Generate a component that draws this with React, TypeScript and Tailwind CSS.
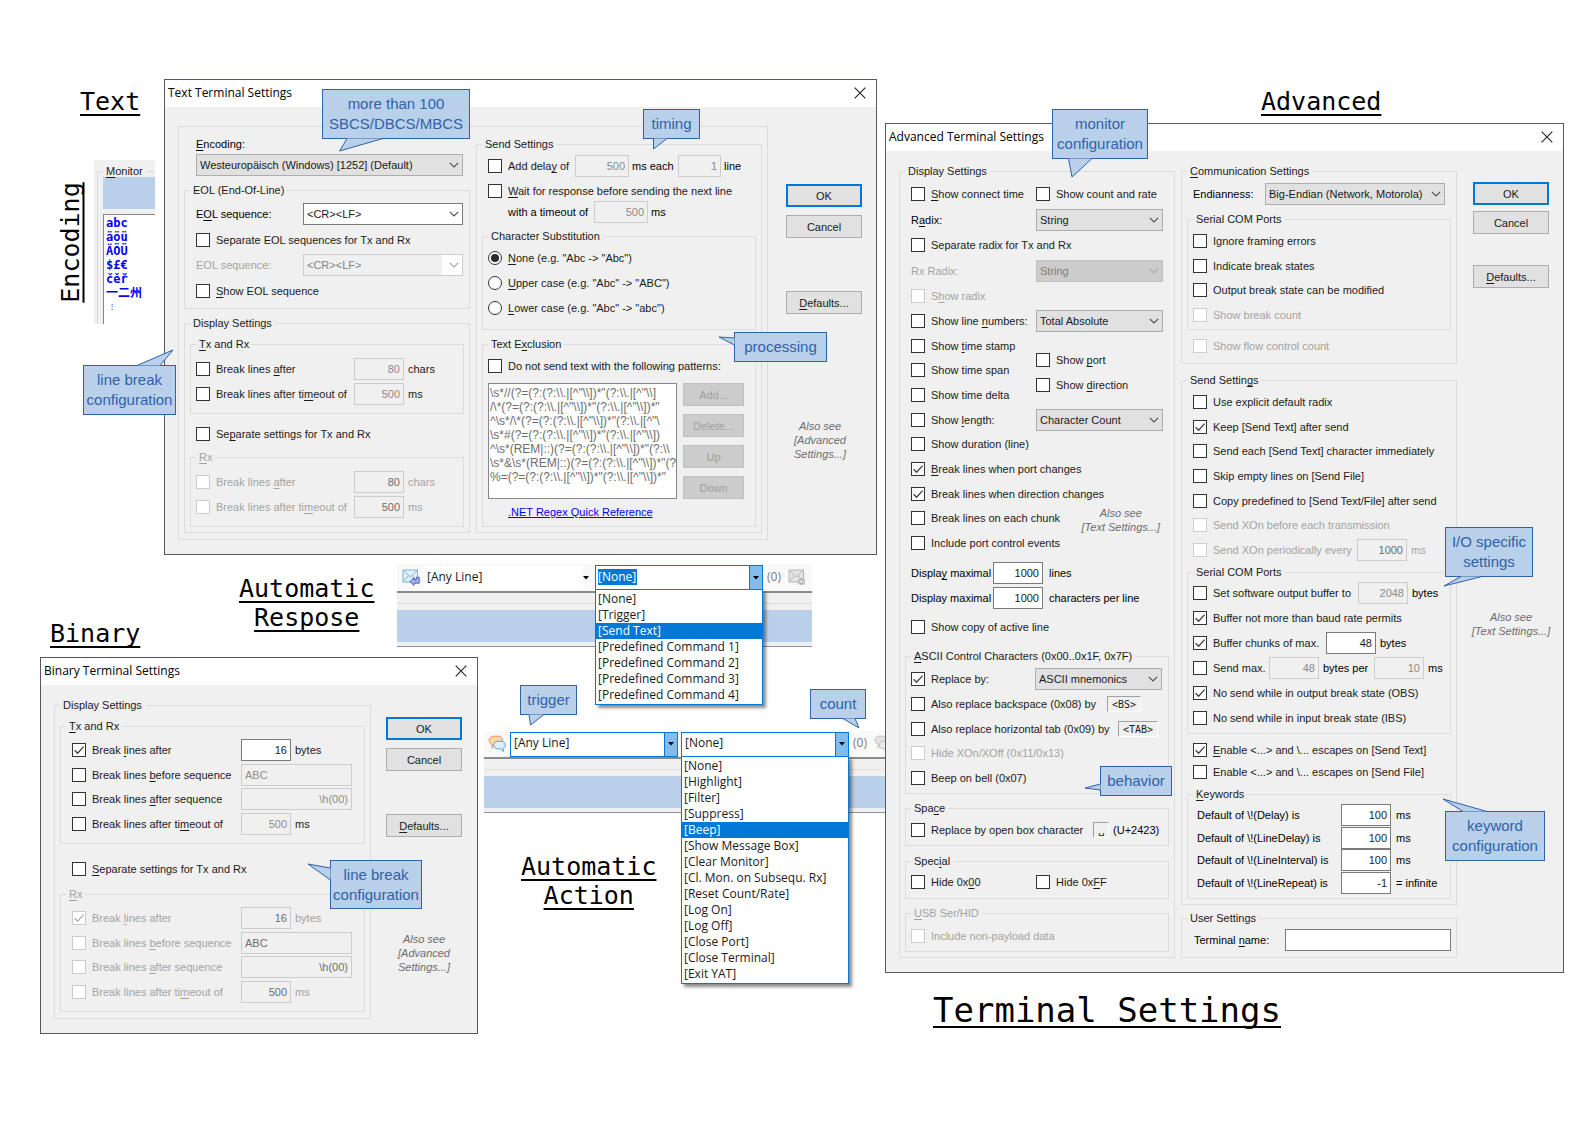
import React from "react";

const UI = "font-['Liberation_Sans',Arial,sans-serif] text-[11px] leading-[14px]";
const SEGOE = "font-['Open_Sans','Noto_Sans',sans-serif] text-[12px]";

/** Renders a caption whose access key is marked with "&". */
function Mn({ t }: { t: string }) {
  const i = t.indexOf("&");
  if (i < 0) return <span>{t}</span>;
  return (
    <span>
      {t.slice(0, i)}
      <span className="underline decoration-1 underline-offset-2 [text-decoration-skip-ink:none]">{t[i + 1]}</span>
      {t.slice(i + 2)}
    </span>
  );
}

/** Titled frame; inner carries the padding so that the title keeps its place. */
function Group({ title, off, className = "", inner = "", children }: { title: string; off?: boolean; className?: string; inner?: string; children: React.ReactNode }) {
  return (
    <fieldset className={"min-w-0 border border-[#dcdcdc] " + className}>
      <legend className={"ml-[5px] px-[3px] " + (off ? "text-[#a3a3a3]" : "text-[#1a1a1a]")}>
        <Mn t={title} />
      </legend>
      <div className={inner}>{children}</div>
    </fieldset>
  );
}

function Check({ t, on, off, className = "" }: { t: string; on?: boolean; off?: boolean; className?: string }) {
  return (
    <label className={"flex h-[22px] shrink-0 items-center gap-[6px] whitespace-nowrap " + (off ? "text-[#a3a3a3] " : "text-[#1a1a1a] ") + className}>
      <span className="relative block h-[14px] w-[14px] shrink-0">
        <input
          type="checkbox"
          defaultChecked={on}
          disabled={off}
          className="peer block h-[14px] w-[14px] appearance-none border border-[#333333] bg-white disabled:border-[#cccccc]"
        />
        <svg viewBox="0 0 14 14" className={"pointer-events-none absolute inset-0 hidden peer-checked:block " + (off ? "stroke-[#b0b0b0]" : "stroke-[#404040]")} fill="none" strokeWidth="1.3">
          <path d="M2.6 7.2 5.6 10.2 11.6 3.6" />
        </svg>
      </span>
      <Mn t={t} />
    </label>
  );
}

function Radio({ t, on }: { t: string; on?: boolean }) {
  return (
    <label className="flex h-[22px] items-center gap-[6px] whitespace-nowrap text-[#1a1a1a]">
      <span className="relative block h-[14px] w-[14px]">
        <input type="radio" name="substitution" defaultChecked={on} className="peer block h-[14px] w-[14px] appearance-none rounded-full border border-[#333333] bg-white" />
        <span className="pointer-events-none absolute inset-[3px] hidden rounded-full bg-[#2b2b2b] peer-checked:block" />
      </span>
      <Mn t={t} />
    </label>
  );
}

function Field({ v, label, off, dark, left, className = "w-[50px]" }: { v: string; label: string; off?: boolean; dark?: boolean; left?: boolean; className?: string }) {
  return (
    <input
      type="text"
      aria-label={label}
      defaultValue={v}
      disabled={off}
      className={
        "h-[22px] shrink-0 border px-[3px] " +
        (left ? "text-left " : "text-right ") +
        (off ? "border-[#cccccc] bg-[#f0f0f0] " + (dark ? "text-[#6d6d6d] " : "text-[#8c8c8c] ") : "border-[#7a7a7a] bg-white text-[#1a1a1a] ") +
        className
      }
    />
  );
}

function Select({ v, label, kind = "list", className = "" }: { v: string; label: string; kind?: "list" | "edit" | "listOff" | "editOff"; className?: string }) {
  const look = {
    list: "border-[#adadad] bg-[#e1e1e1] text-[#1a1a1a]",
    edit: "border-[#7a7a7a] bg-white text-[#1a1a1a]",
    listOff: "border-[#bfbfbf] bg-[#cccccc] text-[#7d7d7d]",
    editOff: "border-[#cccccc] bg-[#f0f0f0] text-[#838383]",
  }[kind];
  const off = kind === "listOff" || kind === "editOff";
  return (
    <span className={"relative block h-[22px] shrink-0 " + className}>
      <select aria-label={label} disabled={off} className={"block h-full w-full appearance-none border pr-5 pl-[3px] opacity-100 " + look}>
        <option>{v}</option>
      </select>
      {kind === "editOff" && <span className="pointer-events-none absolute inset-y-px right-px w-5 bg-white" />}
      <svg viewBox="0 0 10 6" className={"pointer-events-none absolute top-[8px] right-[4px] h-[6px] w-[10px] " + (off ? "stroke-[#a8a8a8]" : "stroke-[#505050]")} fill="none" strokeWidth="1.2">
        <path d="M0.8 0.8 5 5 9.2 0.8" />
      </svg>
    </span>
  );
}

function Btn({ t, kind = "normal", className = "" }: { t: string; kind?: "normal" | "primary" | "off"; className?: string }) {
  const look = {
    normal: "border border-[#adadad] bg-[#e1e1e1] text-[#1a1a1a]",
    primary: "border-2 border-[#0078d7] bg-[#e1e1e1] text-[#1a1a1a]",
    off: "border border-[#bfbfbf] bg-[#cccccc] text-[#a0a0a0]",
  }[kind];
  return (
    <button type="button" disabled={kind === "off"} className={"flex h-[23px] shrink-0 items-center justify-center " + look + " " + className}>
      <Mn t={t} />
    </button>
  );
}

function Also({ lines, className = "" }: { lines: string[]; className?: string }) {
  return (
    <p className={"flex flex-col items-center whitespace-nowrap text-[#6d6d6d] italic " + className}>
      {lines.map((l) => (
        <span key={l}>{l}</span>
      ))}
    </p>
  );
}

function Win({ title, className, children }: { title: string; className: string; children: React.ReactNode }) {
  return (
    <section aria-label={title} className={"absolute border border-[#55585e] bg-[#f0f0f0] " + className}>
      <header className="flex h-[27px] items-center justify-between bg-white pr-[10px] pb-[2px] pl-[3px]">
        <h2 className={SEGOE + " whitespace-nowrap text-black"}>{title}</h2>
        <button type="button" aria-label="Close">
          <svg viewBox="0 0 12 12" className="h-3 w-3 stroke-[#222222]" strokeWidth="1.1">
            <path d="M0.7 0.7 11.3 11.3M11.3 0.7 0.7 11.3" />
          </svg>
        </button>
      </header>
      <div className={"flex " + UI}>{children}</div>
    </section>
  );
}

/** Speech-bubble note; tail is [base, tip, base] in the bubble's own coordinates. */
function Callout({ lines, tail, className }: { lines: string[]; tail: string; className: string }) {
  return (
    <div className={"absolute z-20 flex flex-col items-center justify-center border border-[#2f62a8] bg-[#b9d0ea] font-['Liberation_Sans',Arial,sans-serif] text-[15px] leading-[20px] whitespace-nowrap text-[#2f62a8] " + className}>
      <svg className="absolute -top-px -left-px h-full w-full overflow-visible">
        <polyline points={tail} fill="#b9d0ea" stroke="#2f62a8" strokeWidth="1" />
      </svg>
      {lines.map((l) => (
        <span key={l} className="relative">{l}</span>
      ))}
    </div>
  );
}

function Heading({ lines, className }: { lines: string[]; className: string }) {
  return (
    <h1 className={"absolute flex flex-col items-center font-['DejaVu_Sans_Mono',monospace] whitespace-nowrap text-black underline decoration-2 underline-offset-4 [text-decoration-skip-ink:none] " + className}>
      {lines.map((l) => (
        <span key={l}>{l}</span>
      ))}
    </h1>
  );
}

const PATTERNS = [
  "\\s*//(?=(?:(?:\\\\.|[^\"\\\\])*\"(?:\\\\.|[^\"\\\\]",
  "/\\*(?=(?:(?:\\\\.|[^\"\\\\])*\"(?:\\\\.|[^\"\\\\])*\"",
  "^\\s*/\\*(?=(?:(?:\\\\.|[^\"\\\\])*\"(?:\\\\.|[^\"\\",
  "\\s*#(?=(?:(?:\\\\.|[^\"\\\\])*\"(?:\\\\.|[^\"\\\\])",
  "^\\s*(REM|::)(?=(?:(?:\\\\.|[^\"\\\\])*\"(?:\\\\",
  "\\s*&\\s*(REM|::)(?=(?:(?:\\\\.|[^\"\\\\])*\"(?",
  "%=(?=(?:(?:\\\\.|[^\"\\\\])*\"(?:\\\\.|[^\"\\\\])*\"",
];

function TextTxRx({ title, off, className = "" }: { title: string; off?: boolean; className?: string }) {
  const unit = off ? "text-[#a3a3a3]" : "text-[#1a1a1a]";
  return (
    <Group title={title} off={off} className={"mx-[5px] " + className} inner="flex flex-col gap-[3px] pt-[7px] pb-2 pl-[5px]">
      <div className="flex items-center gap-1">
        <Check t="Break lines &after" off={off} className="w-[154px]" />
        <Field v="80" label="Characters" off dark={off} />
        <span className={unit}>chars</span>
      </div>
      <div className="flex items-center gap-1">
        <Check t="Break lines after ti&meout of" off={off} className="w-[154px]" />
        <Field v="500" label="Timeout" off dark={off} />
        <span className={unit}>ms</span>
      </div>
    </Group>
  );
}

function TextWindow() {
  return (
    <Win title="Text Terminal Settings" className="top-[79px] left-[164px] w-[713px]">
      <div className="mt-[19px] mb-[14px] ml-[13px] flex flex-1 gap-[6px] border border-[#dcdcdc] px-[5px] pb-[6px]">
        <div className="flex w-[286px] flex-col pt-[10px]">
          <span className="ml-3"><Mn t="&Encoding:" /></span>
          <Select v="Westeuropäisch (Windows) [1252] (Default)" label="Encoding" className="mt-[3px] mr-[7px] ml-3" />
          <Group title="EOL (End-Of-Line)" className="mt-[7px]" inner="pt-[6px] pr-[6px] pb-[6px] pl-[11px]">
            <div className="flex h-[99px] flex-col justify-between">
              <div className="flex items-center">
                <span className="w-[107px]"><Mn t="E&OL sequence:" /></span>
                <Select v="<CR><LF>" label="EOL sequence" kind="edit" className="flex-1" />
              </div>
              <Check t="Separate EOL sequences for Tx and Rx" />
              <div className="flex items-center">
                <span className="w-[107px] text-[#a3a3a3]">EOL sequence:</span>
                <Select v="<CR><LF>" label="Rx EOL sequence" kind="editOff" className="flex-1" />
              </div>
              <Check t="&Show EOL sequence" />
            </div>
          </Group>
          <Group title="Display Settings" className="mt-[7px]" inner="pt-[7px] pb-[5px]">
            <TextTxRx title="&Tx and Rx" />
            <Check t="Se&parate settings for Tx and Rx" className="mt-[9px] ml-[11px]" />
            <TextTxRx title="&Rx" off className="mt-[5px]" />
          </Group>
        </div>
        <div className="flex-1 pt-[10px]">
          <Group title="Send Settings" inner="px-[5px] pt-1 pb-[5px]">
            <div className="flex items-center pl-[6px]">
              <Check t="Add dela&y of" className="w-[87px]" />
              <Field v="500" label="Delay" off className="w-[54px]" />
              <span className="w-[49px] pl-[3px]">ms each</span>
              <Field v="1" label="Lines per delay" off className="w-[43px]" />
              <span className="pl-[3px]">line</span>
            </div>
            <div className="mt-1 flex h-5 items-center pl-[6px]">
              <Check t="&Wait for response before sending the next line" />
            </div>
            <div className="flex items-center pl-[26px]">
              <span className="w-[86px]">with a timeout of</span>
              <Field v="500" label="Response timeout" off className="w-[54px]" />
              <span className="pl-[3px]">ms</span>
            </div>
            <Group title="Character Substitution" className="mt-[6px]" inner="flex flex-col gap-[3px] pt-1 pb-[10px] pl-[5px]">
              <Radio t={'&None (e.g. "Abc -> "Abc")'} on />
              <Radio t={'&Upper case (e.g. "Abc" -> "ABC")'} />
              <Radio t={'&Lower case (e.g. "Abc" -> "abc")'} />
            </Group>
            <Group title="Text E&xclusion" className="mt-[7px]" inner="pt-1 pb-[7px] pl-[5px]">
              <Check t="Do not send text with the following patterns:" />
              <div className="mt-[6px] flex gap-[6px]">
                <ul className="h-[116px] w-[189px] border border-[#828790] bg-white pt-[2px] pl-px text-[12px] leading-[14px] whitespace-nowrap text-[#6d6d6d]">
                  {PATTERNS.map((p) => (
                    <li key={p}>{p}</li>
                  ))}
                </ul>
                <div className="flex w-[61px] flex-col justify-between">
                  <Btn t="Add..." kind="off" />
                  <Btn t="Delete..." kind="off" />
                  <Btn t="Up" kind="off" />
                  <Btn t="Down" kind="off" />
                </div>
              </div>
              <a href="#regex" className="mt-[6px] ml-5 block text-[#0000ff] underline">.NET Regex Quick Reference</a>
            </Group>
          </Group>
        </div>
      </div>
      <div className="mr-[14px] ml-[18px] flex w-[76px] flex-col pt-[77px]">
        <Btn t="OK" kind="primary" />
        <Btn t="Cancel" className="mt-2" />
        <Btn t="&Defaults..." className="mt-[53px]" />
        <Also lines={["Also see", "[Advanced", "Settings...]"]} className="mt-[105px] -ml-2" />
      </div>
    </Win>
  );
}

function BinaryTxRx({ title, off, className = "" }: { title: string; off?: boolean; className?: string }) {
  const unit = off ? "text-[#a3a3a3]" : "text-[#1a1a1a]";
  return (
    <Group title={title} off={off} className={"mx-[5px] " + className} inner="pt-[6px] pb-2 pl-[11px]">
      <div className="flex h-[96px] flex-col justify-between">
        <div className="flex items-center gap-1">
          <Check t="Break &lines after" on off={off} className="w-[165px]" />
          <Field v="16" label="Bytes" off={off} dark />
          <span className={unit}>bytes</span>
        </div>
        <div className="flex items-center gap-1">
          <Check t="Break lines &before sequence" off={off} className="w-[165px]" />
          <Field v="ABC" label="Sequence before" off dark={off} left className="w-[111px]" />
        </div>
        <div className="flex items-center gap-1">
          <Check t="Break lines &after sequence" off={off} className="w-[165px]" />
          <Field v="\h(00)" label="Sequence after" off dark={off} className="w-[111px]" />
        </div>
        <div className="flex items-center gap-1">
          <Check t="Break lines after ti&meout of" off={off} className="w-[165px]" />
          <Field v="500" label="Timeout" off dark={off} />
          <span className={unit}>ms</span>
        </div>
      </div>
    </Group>
  );
}

function BinaryWindow() {
  return (
    <Win title="Binary Terminal Settings" className="top-[657px] left-[40px] w-[438px]">
      <div className="flex-1 pt-[13px] pb-[14px] pl-[13px]">
        <Group title="Display Settings" inner="pt-[7px] pb-[6px]">
          <BinaryTxRx title="&Tx and Rx" />
          <Check t="&Separate settings for Tx and Rx" className="mt-[14px] ml-[17px]" />
          <BinaryTxRx title="&Rx" off className="mt-[7px]" />
        </Group>
      </div>
      <div className="mx-[15px] flex w-[76px] flex-col pt-8">
        <Btn t="OK" kind="primary" />
        <Btn t="Cancel" className="mt-2" />
        <Btn t="&Defaults..." className="mt-[43px]" />
        <Also lines={["Also see", "[Advanced", "Settings...]"]} className="mt-[95px]" />
      </div>
    </Win>
  );
}

function Sunken({ children, className = "" }: { children: React.ReactNode; className?: string }) {
  return (
    <span className={"block h-4 border border-t-[#a0a0a0] border-r-white border-b-white border-l-[#a0a0a0] px-1 font-['DejaVu_Sans_Mono',monospace] text-[10px] leading-[15px] text-[#1a1a1a] " + className}>
      {children}
    </span>
  );
}

function DisplayColumn() {
  return (
    <Group title="Display Settings" className="w-[276px]" inner="px-[5px] pt-[5px] pb-[5px]">
      <div className="pl-[6px]">
        <div className="flex h-[124px] flex-col justify-between">
          <div className="flex">
            <Check t="&Show connect time" className="w-[125px]" />
            <Check t="Show count and rate" />
          </div>
          <div className="flex items-center">
            <span className="w-[125px]"><Mn t="R&adix:" /></span>
            <Select v="String" label="Radix" className="w-[127px]" />
          </div>
          <Check t="Separate radix for Tx and Rx" />
          <div className="flex items-center">
            <span className="w-[125px] text-[#a3a3a3]">Rx Radix:</span>
            <Select v="String" label="Rx Radix" kind="listOff" className="w-[127px]" />
          </div>
          <Check t="S&how radix" off />
        </div>
        <div className="mt-[3px] flex">
          <div className="flex h-[244px] w-[125px] flex-col justify-between">
            <Check t="Show line &numbers:" />
            <Check t="Show &time stamp" />
            <Check t="Show time span" />
            <Check t="Show time delta" />
            <Check t="Show &length:" />
            <Check t="Show duration (line)" />
            <Check t="&Break lines when port changes" on />
            <Check t="Break lines when direction changes" on />
            <Check t="Break lines on each chunk" />
            <Check t="Include port control events" />
          </div>
          <div className="flex w-[127px] flex-col">
            <Select v="Total Absolute" label="Line number mode" />
            <Check t="Show &port" className="mt-[17px]" />
            <Check t="Show &direction" className="mt-[3px]" />
            <Select v="Character Count" label="Length mode" className="mt-[13px]" />
            <Also lines={["Also see", "[Text Settings...]"]} className="mt-[75px] mr-[3px] self-end" />
          </div>
        </div>
        <div className="mt-2 flex items-center">
          <span className="w-[82px]"><Mn t="Displa&y maximal" /></span>
          <Field v="1000" label="Maximal lines" />
          <span className="pl-[6px]">lines</span>
        </div>
        <div className="mt-[3px] flex items-center">
          <span className="w-[82px]">Display maximal</span>
          <Field v="1000" label="Maximal characters per line" />
          <span className="pl-[6px]">characters per line</span>
        </div>
        <Check t="Show copy of active line" className="mt-[7px]" />
      </div>
      <Group title="&ASCII Control Characters (0x00..0x1F, 0x7F)" className="mt-[11px]" inner="pt-[5px] pb-1 pl-[5px]">
        <div className="flex h-[121px] flex-col justify-between">
          <div className="flex items-center">
            <Check t="Replace by:" on className="w-[124px]" />
            <Select v="ASCII mnemonics" label="Replacement" className="w-[127px]" />
          </div>
          <div className="flex items-center gap-2">
            <Check t="Also replace backspace (0x08) by" className="w-[188px]" />
            <Sunken>&lt;BS&gt;</Sunken>
          </div>
          <div className="flex items-center gap-2">
            <Check t="Also replace horizontal tab (0x09) by" className="w-[199px]" />
            <Sunken>&lt;TAB&gt;</Sunken>
          </div>
          <Check t="Hide XOn/XOff (0x11/0x13)" off />
          <Check t="Beep on bell (0x07)" />
        </div>
      </Group>
      <Group title="Spa&ce" className="mt-[7px]" inner="pt-1 pb-1 pl-[5px]">
        <div className="flex items-center gap-1">
          <Check t="Replace by open box character" className="w-[178px]" />
          <Sunken>␣</Sunken>
          <span>(U+2423)</span>
        </div>
      </Group>
      <Group title="Spec&ial" className="mt-2" inner="pt-[3px] pb-[5px] pl-[5px]">
        <div className="flex">
          <Check t="Hide 0x&00" className="w-[125px]" />
          <Check t="Hide 0x&FF" />
        </div>
      </Group>
      <Group title="&USB Ser/HID" off className="mt-[7px]" inner="pt-[5px] pb-1 pl-[5px]">
        <Check t="Include non-payload data" off />
      </Group>
    </Group>
  );
}

const KEYWORDS = [
  ["Default of \\!(Delay) is", "100", "ms"],
  ["Default of \\!(LineDelay) is", "100", "ms"],
  ["Default of \\!(LineInterval) is", "100", "ms"],
  ["Default of \\!(LineRepeat) is", "-1", "= infinite"],
];

function CommunicationColumn() {
  return (
    <div className="w-[276px]">
      <Group title="&Communication Settings" inner="px-[5px] pt-[5px] pb-[6px]">
        <div className="flex items-center pl-[6px]">
          <span className="w-[72px]">Endianness:</span>
          <Select v="Big-Endian (Network, Motorola)" label="Endianness" className="w-[180px]" />
        </div>
        <Group title="Serial COM Ports" className="mt-[7px]" inner="pt-1 pb-[3px] pl-[5px]">
          <div className="flex h-24 flex-col justify-between">
            <Check t="Ignore framing errors" />
            <Check t="Indicate break states" />
            <Check t="Output break state can be modified" />
            <Check t="Show break count" off />
          </div>
        </Group>
        <Check t="Show flow control count" off className="mt-[5px] ml-[6px]" />
      </Group>
      <Group title="Send Settin&gs" className="mt-[9px]" inner="px-[5px] pt-1 pb-[5px]">
        <div className="flex h-[170px] flex-col justify-between pl-[6px]">
          <Check t="Use explicit default radix" />
          <Check t="Keep [Send Text] after send" on />
          <Check t="Send each [Send Text] character immediately" />
          <Check t="Skip empty lines on [Send File]" />
          <Check t="Copy predefined to [Send Text/File] after send" />
          <Check t="Send XOn before each transmission" off />
          <div className="flex items-center gap-1">
            <Check t="Send XOn periodically every" off className="w-[160px]" />
            <Field v="1000" label="XOn interval" off dark />
            <span className="text-[#a3a3a3]">ms</span>
          </div>
        </div>
        <Group title="Serial COM Ports" className="mt-1" inner="pt-[3px] pb-1 pl-[5px]">
          <div className="flex h-[147px] flex-col justify-between">
            <div className="flex items-center gap-1">
              <Check t="Set software output buffer to" className="w-[161px]" />
              <Field v="2048" label="Output buffer size" off />
              <span>bytes</span>
            </div>
            <Check t="Buffer not more than baud rate permits" on />
            <div className="flex items-center gap-1">
              <Check t="Buffer chunks of max." on className="w-[129px]" />
              <Field v="48" label="Chunk size" />
              <span>bytes</span>
            </div>
            <div className="flex items-center gap-1">
              <Check t="Send max." className="w-[72px]" />
              <Field v="48" label="Maximal bytes" off />
              <span className="w-[47px]">bytes per</span>
              <Field v="10" label="Per milliseconds" off />
              <span>ms</span>
            </div>
            <Check t="No send while in output break state (OBS)" on />
            <Check t="No send while in input break state (IBS)" />
          </div>
        </Group>
        <Check t="&Enable <...> and \... escapes on [Send Text]" on className="mt-[5px] ml-[6px]" />
        <Check t="Enable <...> and \... escapes on [Send File]" className="ml-[6px]" />
        <Group title="&Keywords" className="mt-1" inner="pt-[3px] pb-1 pl-[9px]">
          <div className="flex h-[90px] flex-col justify-between">
            {KEYWORDS.map(([label, value, unit]) => (
              <div key={label} className="flex items-center">
                <span className="w-[144px] whitespace-nowrap">{label}</span>
                <Field v={value} label={label} />
                <span className="pl-[5px]">{unit}</span>
              </div>
            ))}
          </div>
        </Group>
      </Group>
      <Group title="User Settings" className="mt-[6px]" inner="px-[5px] pt-1 pb-[6px]">
        <label className="flex items-center pl-[7px]">
          <span className="w-[91px]"><Mn t="Terminal &name:" /></span>
          <input type="text" className="h-[22px] w-[166px] border border-[#7a7a7a] bg-white px-1" />
        </label>
      </Group>
    </div>
  );
}

function AdvancedWindow() {
  return (
    <Win title="Advanced Terminal Settings" className="top-[123px] left-[885px] w-[679px]">
      <div className="flex flex-1 gap-[6px] pt-[13px] pb-[14px] pl-[13px]">
        <DisplayColumn />
        <CommunicationColumn />
      </div>
      <div className="mr-[14px] ml-4 flex w-[76px] flex-col items-stretch pt-[31px]">
        <Btn t="OK" kind="primary" />
        <Btn t="Cancel" className="mt-[6px]" />
        <Btn t="&Defaults..." className="mt-[31px]" />
        <Also lines={["Also see", "[Text Settings...]"]} className="mt-[322px]" />
      </div>
    </Win>
  );
}

const MONITOR = ["abc", "äöü", "ÄÖÜ", "$£€", "čěř", "一二州"];

function MonitorPanel() {
  return (
    <section aria-label="Monitor" className={"absolute top-[160px] left-[94px] h-[164px] w-[61px] overflow-hidden bg-[#f0f0f0] pl-[3px] " + UI}>
      <Group title="&Monitor" className="mt-1 h-[170px] border-r-0" inner="pl-[5px]">
        <div className="-mt-px h-8 bg-[#b9d0ea]" />
        <div className="mt-[5px] h-[120px] border-t border-l border-[#828790] bg-white pt-px pl-[2px] font-['DejaVu_Sans_Mono','Noto_Sans_CJK_SC',monospace] text-[12px] leading-[14px] font-bold whitespace-nowrap text-[#0000ff]">
          {MONITOR.map((l) => (
            <div key={l}>{l}</div>
          ))}
          <div className="pl-[2px] text-[8px] font-normal">⋮</div>
        </div>
      </Group>
    </section>
  );
}

function Caret() {
  return (
    <svg viewBox="0 0 6 4" className="h-1 w-[6px] fill-black">
      <path d="M0 0h6L3 3.5z" />
    </svg>
  );
}

function Combo({ v, label, selected, items, active }: { v: string; label: string; selected?: boolean; items?: string[]; active?: string }) {
  return (
    <div className="relative w-[168px] shrink-0">
      <div className="flex h-[25px] items-center border border-[#0078d7] bg-white pl-[2px]">
        <input
          aria-label={label}
          defaultValue={v}
          className={"mb-[2px] h-[16px] min-w-0 " + (selected ? "w-[39px] bg-[#0078d7] text-white" : "flex-1 bg-transparent pl-px text-[#1a1a1a]")}
        />
        <button type="button" aria-label={"Open " + label} className="ml-auto flex h-full w-[13px] shrink-0 items-center justify-center border-l border-[#0078d7] bg-[#80bcee]">
          <Caret />
        </button>
      </div>
      {items && (
        <ul role="listbox" className="absolute top-[24px] left-0 z-10 w-full border border-[#0078d7] bg-white py-px leading-[16px] shadow-[3px_3px_3px_rgba(0,0,0,0.45)]">
          {items.map((i) => (
            <li key={i} role="option" aria-selected={i === active} className={"pl-[2px] whitespace-nowrap " + (i === active ? "bg-[#0078d7] text-white" : "text-[#1a1a1a]")}>
              {i}
            </li>
          ))}
        </ul>
      )}
    </div>
  );
}

function MailIcon({ off }: { off?: boolean }) {
  return (
    <svg viewBox="0 0 18 18" className="h-[18px] w-[18px] shrink-0" fill="none">
      <rect x="1" y="1" width="14.5" height="12" fill={off ? "#e4e4e4" : "#e3f1fb"} stroke={off ? "#b4b4b4" : "#78b4e0"} />
      <path d="M1.5 1.5 8.25 8 15 1.5M1.5 12.5 6.5 6.5M15 12.5 10 6.5" stroke={off ? "#b4b4b4" : "#78b4e0"} />
      {off ? (
        <>
          <circle cx="13.5" cy="12.5" r="3.6" fill="#b8b8b8" />
          <path d="M11.5 12.5h4" stroke="#f2f2f2" strokeWidth="1.4" />
        </>
      ) : (
        <path d="M7.8 12.6 12 8.8v2.2h2.2V8.3h3v5.9H12v2.2z" fill="#a9b2ea" stroke="#4a52a8" strokeWidth="0.9" />
      )}
    </svg>
  );
}

function ChatIcon({ off }: { off?: boolean }) {
  return (
    <svg viewBox="0 0 18 18" className="h-[18px] w-[18px] shrink-0">
      <path
        d="M5.8 1.2h4.4c2.6 0 4.4 1.8 4.4 4s-1.8 4.5-4.4 4.5H6.5L4.2 13.2 3.8 9.2C2.2 8.5 1 7 1 5.2c0-2.2 1.9-4 4.8-4z"
        fill={off ? "#e2e2e2" : "#fbd9a0"}
        stroke={off ? "#c0c0c0" : "#e8926a"}
      />
      <path
        d="M10 6.2h3c2.5 0 4.4 1.5 4.4 3.8 0 1.5-.9 2.8-2.4 3.4l.6 3.3-3.2-2.9H10c-2.6 0-4.4-1.6-4.4-3.8S7.4 6.2 10 6.2z"
        fill={off ? "#ececec" : "#dceefb"}
        stroke={off ? "#bababa" : "#62a4d8"}
      />
    </svg>
  );
}

function MonitorStrip() {
  return (
    <div className="border-y border-t-2 border-t-[#8a8a8a] border-b-[#8b93a3] bg-[#f0f0f0] pt-[10px] pb-1">
      <div className="border-t border-[#dddddd] pt-[6px]">
        <div className="h-8 bg-[#b9d0ea]" />
      </div>
    </div>
  );
}

function AutoResponse() {
  return (
    <section aria-label="Automatic response" className={"absolute top-[564px] left-[397px] w-[415px] " + SEGOE}>
      <div className="flex h-[27px] items-center bg-[#f9f9f9] pl-[5px]">
        <MailIcon />
        <div className="ml-1 flex h-6 w-[164px] items-center bg-white pb-[2px] pl-[3px]">
          <input aria-label="Response trigger" defaultValue="[Any Line]" className="min-w-0 flex-1 text-[#1a1a1a]" />
        </div>
        <div className="mr-[6px] ml-auto"><Caret /></div>
        <Combo
          v="[None]"
          label="Response"
          selected
          active="[Send Text]"
          items={["[None]", "[Trigger]", "[Send Text]", "[Predefined Command 1]", "[Predefined Command 2]", "[Predefined Command 3]", "[Predefined Command 4]"]}
        />
        <span className="pr-[7px] pb-[2px] pl-1 text-[#7d7d7d]">(0)</span>
        <div className="pr-[6px]"><MailIcon off /></div>
      </div>
      <MonitorStrip />
    </section>
  );
}

function AutoAction() {
  return (
    <section aria-label="Automatic action" className={"absolute top-[731px] left-[484px] w-[401px] " + SEGOE}>
      <div className="flex h-[26px] items-center bg-[#f9f9f9] pl-1">
        <ChatIcon />
        <div className="mr-[3px] ml-1"><Combo v="[Any Line]" label="Action trigger" /></div>
        <Combo
          v="[None]"
          label="Action"
          active="[Beep]"
          items={[
            "[None]",
            "[Highlight]",
            "[Filter]",
            "[Suppress]",
            "[Beep]",
            "[Show Message Box]",
            "[Clear Monitor]",
            "[Cl. Mon. on Subsequ. Rx]",
            "[Reset Count/Rate]",
            "[Log On]",
            "[Log Off]",
            "[Close Port]",
            "[Close Terminal]",
            "[Exit YAT]",
          ]}
        />
        <span className="pr-[7px] pb-[2px] pl-1 text-[#7d7d7d]">(0)</span>
        <ChatIcon off />
      </div>
      <MonitorStrip />
    </section>
  );
}

export default function App() {
  return (
    <main className="relative min-h-screen overflow-hidden bg-white">
      <Heading lines={["Text"]} className="top-[87px] left-[80px] text-[25px] leading-[29px]" />
      <Heading lines={["Encoding"]} className="top-[228px] left-[10px] w-[120px] -rotate-90 text-[25px] leading-[29px]" />
      <Heading lines={["Automatic", "Respose"]} className="top-[574px] left-[239px] text-[25px] leading-[29px]" />
      <Heading lines={["Binary"]} className="top-[619px] left-[50px] text-[25px] leading-[29px]" />
      <Heading lines={["Automatic", "Action"]} className="top-[852px] left-[521px] text-[25px] leading-[29px]" />
      <Heading lines={["Advanced"]} className="top-[87px] left-[1261px] text-[25px] leading-[29px]" />
      <Heading lines={["Terminal Settings"]} className="top-[990px] left-[933px] text-[34px] leading-[40px]" />

      <MonitorPanel />
      <TextWindow />
      <BinaryWindow />
      <AutoResponse />
      <AutoAction />
      <AdvancedWindow />

      <Callout lines={["more than 100", "SBCS/DBCS/MBCS"]} tail="25,49.5 17.5,62 61,49.5" className="top-[89px] left-[322px] h-[50px] w-[148px]" />
      <Callout lines={["timing"]} tail="10.5,29.5 10.5,40 24,29.5" className="top-[109px] left-[643px] h-[30px] w-[57px]" />
      <Callout lines={["processing"]} tail="0.5,6 -15,5 0.5,13" className="top-[332px] left-[734px] h-[30px] w-[93px]" />
      <Callout lines={["line break", "configuration"]} tail="54,0.5 90,-15 77,0.5" className="top-[365px] left-[83px] h-[50px] w-[93px]" />
      <Callout lines={["monitor", "configuration"]} tail="16.5,49.5 20,68 40,49.5" className="top-[109px] left-[1052px] h-[50px] w-[96px]" />
      <Callout lines={["I/O specific", "settings"]} tail="16,49.5 -1,59 37,49.5" className="top-[527px] left-[1445px] h-[50px] w-[88px]" />
      <Callout lines={["keyword", "configuration"]} tail="18,0.5 -2,-12 42,0.5" className="top-[811px] left-[1445px] h-[50px] w-[100px]" />
      <Callout lines={["behavior"]} tail="0.5,18 -15,22 0.5,24" className="top-[766px] left-[1100px] h-[30px] w-[72px]" />
      <Callout lines={["line break", "configuration"]} tail="0.5,8 -22,4 0.5,20" className="top-[860px] left-[330px] h-[49px] w-[92px]" />
      <Callout lines={["trigger"]} tail="9,29.5 10.5,40 24,29.5" className="top-[685px] left-[520px] h-[30px] w-[57px]" />
      <Callout lines={["count"]} tail="33,29.5 49,39 45,29.5" className="top-[689px] left-[810px] h-[30px] w-[56px]" />
    </main>
  );
}
